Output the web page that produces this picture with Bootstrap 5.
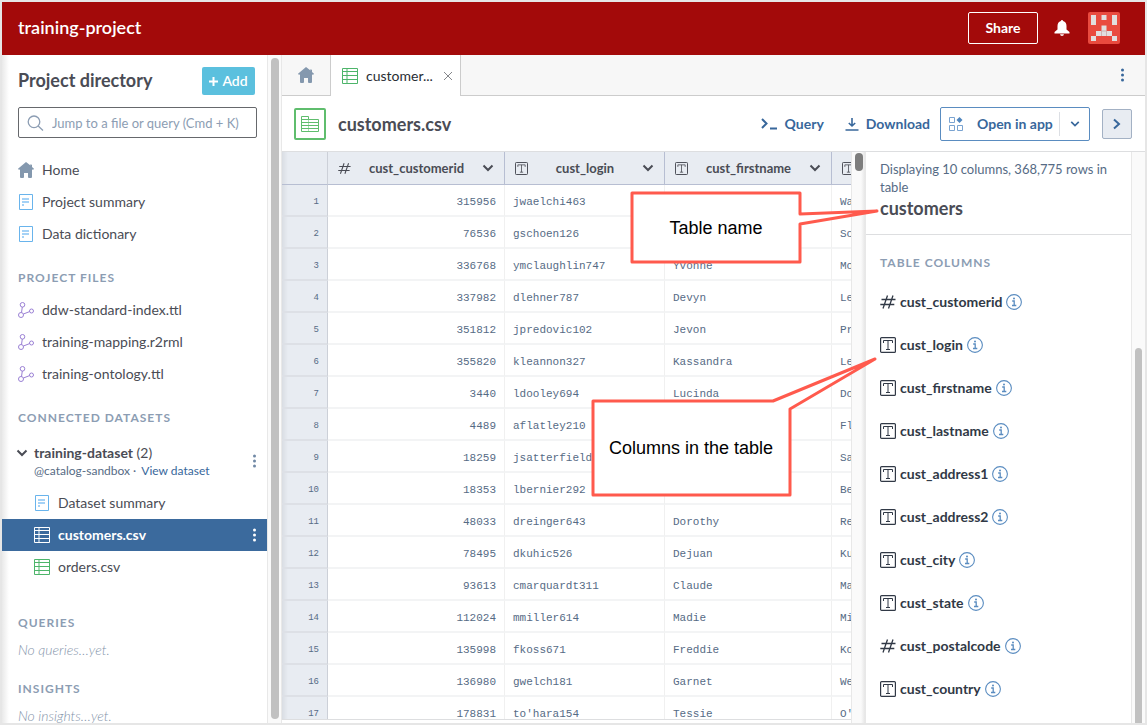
<!DOCTYPE html>
<html lang="en">
<head>
<meta charset="utf-8">
<meta name="viewport" content="width=device-width, initial-scale=1">
<title>training-project</title>
<link href="https://cdn.jsdelivr.net/npm/bootstrap@5.3.0/dist/css/bootstrap.min.css" rel="stylesheet">
<style>
:root{--ink:#4a4c55;--slate:#566b85;--mute:#8c9db3;--blue:#38679b;--line:#dddee0}
body{font-family:Lato,sans-serif;font-size:14px;line-height:20px;color:var(--ink);background:#fff}
button{font-family:inherit}
svg{display:block;flex:none}
.shell{height:100vh;border:2px solid #e6e6e6;overflow:hidden}
.topbar{height:53px;flex:none;background:#a30a0a;color:#fff;padding:0 25px 2px 16px}
.brand{font-size:18px;line-height:22px;padding-bottom:2px;font-weight:600}
.share{width:70px;height:32px;border:1px solid #fff;border-radius:2px;color:#fff;background:none;font-size:14px;font-weight:700;padding:0}
.bell{margin-left:16px}
.avatar{margin-left:18px}
.plain{background:none;border:0;padding:0;color:inherit}
.side{width:265px;flex:none;background:linear-gradient(90deg,#e9e9e9,#fff 7px);overflow:hidden;padding-top:12px}
.side-top{padding:0 12px 0 16px;height:28px}
.side-title{font-size:18px;font-weight:700;margin:0}
.add{width:53px;height:28px;border:0;border-radius:2px;background:#5bc0de;color:#fff;font-weight:600;font-size:14px;padding:0}
.finder{margin:12px 10px 16px 16px;height:31px;border:1px solid #66686c;border-radius:2px;padding:0 8px;color:var(--mute);background:#fff}
.finder input{border:0;outline:0;padding:0;min-width:0;width:100%;font-size:13px;background:none;color:var(--mute)}
.finder input::placeholder{color:#8c9db3;opacity:1}
.row-link{height:32px;padding:0 10px 0 16px;gap:8px;color:var(--ink);text-decoration:none;font-size:14px}
.row-link.sub{padding-left:32px}
.row-link.picked{background:#3b6a9d;color:#fff;font-weight:700}
.heading{margin:12px 16px 0;line-height:32px;font-size:12px;font-weight:700;letter-spacing:1px;color:var(--mute)}
.heading.far{margin-top:24px}
.none-yet{padding:0 16px;line-height:22px;font-style:italic;font-weight:300;color:#8494aa;margin:0}
.dataset{padding:9px 10px 8px 14px;gap:6px}
.dataset .handle{font-size:12px;line-height:16px;color:var(--slate)}
.dataset a{color:var(--blue);text-decoration:none;margin-left:2px}
.track{flex:none;width:15px;background:#fafafa;border:1px solid #e8e8e8;border-width:0 1px;padding:3px 3px 4px}
.thumb{border-radius:4px;background:#c1c1c1;width:8px}
.main{min-width:0}
.tabs{height:41px;flex:none;background:#f7f7f7;border-bottom:1px solid #ccc}
.tabs .home-tab{width:49px;border-right:1px solid #ccc;color:#8498ae}
.tabs .file-tab{width:130px;height:41px;background:#fff;border-right:1px solid #ccc;padding:0 7px 0 11px;color:#292d34;gap:8px}
.tab-menu{color:var(--blue);margin-right:20px}
.filebar{height:56px;flex:none;border-bottom:1px solid var(--line);padding:0 13px 0 12px}
.filebar h1{font-size:18px;font-weight:700;margin:0 0 0 12px;line-height:24px}
.tool{color:var(--blue);font-weight:700;gap:7px}
.tool+.tool{margin-left:21px}
.openin{width:150px;height:34px;margin-left:10px;border:1px solid #5a8cc0;border-radius:2px;background:#fff;color:var(--blue)}
.openin button{color:var(--blue);font-weight:700}
.openin .app{gap:14px;padding-left:8px}
.openin .split{width:30px;height:24px;border-left:1px solid #dcdfe4}
.fold{width:30px;height:30px;margin-left:12px;border:1px solid #a3b1c4;border-radius:2px;background:#e8ecf2;color:var(--blue);padding:0}
.panes{min-height:0}
.sheet{overflow:hidden;margin-bottom:3px;border-bottom:1px solid var(--line);min-width:0}
.grid-data{table-layout:fixed;width:710px;border-collapse:separate;border-spacing:0;font:11px/16px "Liberation Mono",monospace;color:var(--slate)}
.grid-data th,.grid-data td{height:32px;padding:3px 8px 0;white-space:nowrap;overflow:hidden;border-right:1px solid #f0f0f0;border-bottom:2px solid #f3f4f5;background:#fff}
.grid-data thead th{height:33px;background:#e8ecf2;border-right:1px solid #b7bed2;border-bottom:1px solid #b7bed2;font:700 13px/20px Lato,sans-serif;color:var(--ink);padding:0 10px}
.grid-data thead th:first-child,.grid-data tbody th{border-right:1px solid #ccd0d8}
.grid-data tbody th,.grid-data thead th:first-child{background:linear-gradient(90deg,#d9dde3,#e8ecf2 6px)}
.grid-data tbody th{border-bottom-color:#dde0e6;text-align:right;font-weight:400;font-size:9px}
.grid-data .num{text-align:right}
.sheet-track{padding-top:1px;background:linear-gradient(90deg,#fafafa 9px,#e6e6e6)}
.sheet-track .thumb{height:18px;background:#7d7d7d}
.info{width:266px;flex:none;overflow:hidden;border-right:1px solid #e8e8e8}
.summary{padding:8px 14px 14px;line-height:18px;font-size:13px;color:var(--slate);border-bottom:1px solid var(--line)}
.summary h2{font-size:18px;line-height:24px;font-weight:700;margin:0;color:var(--ink)}
.info h3{margin:20px 14px 9px;font-size:12px;line-height:16px;font-weight:700;letter-spacing:1px;color:var(--mute)}
.field{height:43px;margin:0 14px;gap:4px;font-size:14px;font-weight:700;color:#313946}
.field .plain{color:#5a8cc0}
.info-track{width:13px;border:0;padding-bottom:0}
.info-track .thumb{height:66%;border-radius:4px 4px 0 0}
.note{position:absolute;z-index:2;pointer-events:none}
.note text{font:18px "Liberation Sans",sans-serif;text-anchor:middle;fill:#000}
.note path{fill:#fff;stroke:#ff5a4d;stroke-width:3;stroke-linejoin:round}
.note-name{top:134px;right:264px}
.note-cols{top:301px;right:266px}
</style>
</head>
<body>
<svg width="0" height="0" class="position-absolute" aria-hidden="true">
<symbol id="home" viewBox="0 0 16 16"><path fill="currentColor" d="M8 0 0 6.8 1 8l1-.7V15q0 1 1 1h2q1 0 1-1v-4h4v4q0 1 1 1h2q1 0 1-1V7.300l1 .7 1-1.200-2-1.700V3l-1.500-1v1.600z"/></symbol>
<symbol id="doc" viewBox="0 0 16 16"><path fill="#fff" stroke="#69b4ec" d="M1.500.5h13v15h-13z"/><path stroke="#a5d2f6" stroke-width="2" d="M4 5h7M4 8h7M4 11h2"/></symbol>
<symbol id="graph" viewBox="0 0 16 16"><g fill="none" stroke="#9a80d4"><circle cx="4.500" cy="2.800" r="2.300"/><circle cx="3" cy="13" r="2.500"/><circle cx="13.500" cy="9" r="2"/><path d="M4.300 5 3.500 10.500M5.400 12 11.600 9.600"/></g></symbol>
<symbol id="grid" viewBox="0 0 16 16"><g fill="none" stroke="currentColor"><path d="M.5.5h15v15H.5zM.5 3.500h15M.5 7.500h15M.5 11.500h15"/><path opacity=".5" stroke-width="2" d="M5 1v14"/></g></symbol>
<symbol id="dots" viewBox="0 0 4 16"><g fill="currentColor"><circle cx="2" cy="3" r="1.500"/><circle cx="2" cy="8" r="1.500"/><circle cx="2" cy="13" r="1.500"/></g></symbol>
<symbol id="down" viewBox="0 0 12 12"><path fill="none" stroke="currentColor" stroke-width="2" d="m1.500 3.500 4.500 4.500 4.500-4.500"/></symbol>
<symbol id="typeT" viewBox="0 0 16 16"><rect x=".6" y=".6" width="14.800" height="14.800" rx="1" fill="none" stroke="currentColor" stroke-width="1.200"/><path fill="none" stroke="currentColor" d="M3.500 6V3.500h9V6M8 3.500v9M6 12.500h4"/></symbol>
<symbol id="hash" viewBox="0 0 16 16"><path fill="none" stroke="currentColor" stroke-width="1.300" d="M7.500 1.500 3 14.500M13 1.500 8.500 14.500M1.500 5.500h14M.3 10.500h14"/></symbol>
<symbol id="info" viewBox="0 0 16 16"><circle cx="8" cy="8" r="7.400" fill="none" stroke="currentColor" stroke-width="1.100"/><path fill="none" stroke="currentColor" stroke-width="1.300" d="M6.200 7h2v4.500M6 11.500h4.300"/><circle cx="8" cy="4.500" r="1" fill="currentColor"/></symbol>
</svg>
<div class="shell d-flex flex-column">
<header class="topbar d-flex align-items-center">
<span class="brand me-auto">training-project</span>
<button class="share">Share</button>
<button class="plain bell" aria-label="Notifications"><svg width="16" height="16" viewBox="0 0 16 16"><path fill="#fff" d="M8 0q1 0 1.100 1Q12.500 2 12.500 6v3.500L15.500 12v1.500H.5V12L3.500 9.500V6q0-4 3.400-5Q7 0 8 0M6 14.200h4Q9.800 16 8 16t-2-1.800"/></svg></button>
<button class="plain avatar" aria-label="Account"><svg width="32" height="32" viewBox="0 0 32 32"><rect width="32" height="32" rx="2" fill="#e94b3f"/><path fill="#e2dfdf" d="M3 3h5v10H3zM13.500 3h5v5h-5zM24 3h5v10h-5zM13.500 13.500h5V19H24v5H8v-5h5.500zM3 24h5v5H3zM24 24h5v5h-5z"/><path stroke="#c9a09d" stroke-width=".7" d="M13.500 19h5M13.500 19v5M18.500 19v5"/></svg></button>
</header>
<div class="d-flex flex-grow-1 panes">
<nav class="side">
<div class="side-top d-flex align-items-center justify-content-between"><h2 class="side-title">Project directory</h2><button class="add d-flex align-items-center justify-content-center gap-1"><svg width="9" height="9"><path stroke="#fff" stroke-width="2" d="M4.500 0v9M0 4.500h9"/></svg>Add</button></div>
<label class="finder d-flex align-items-center gap-2"><svg width="17" height="16" viewBox="0 0 17 16"><g fill="none" stroke="currentColor" stroke-width="1.300"><circle cx="7" cy="6.800" r="5.800"/><path d="m11.200 11 4.800 4.500"/></g></svg><input type="text" aria-label="Find" placeholder="Jump to a file or query (Cmd + K)"></label>
<a href="#" class="row-link d-flex align-items-center"><svg width="16" height="16" color="#8498ae"><use href="#home"/></svg>Home</a>
<a href="#" class="row-link d-flex align-items-center"><svg width="16" height="16"><use href="#doc"/></svg>Project summary</a>
<a href="#" class="row-link d-flex align-items-center"><svg width="16" height="16"><use href="#doc"/></svg>Data dictionary</a>
<h3 class="heading">PROJECT FILES</h3>
<a href="#" class="row-link d-flex align-items-center"><svg width="16" height="16"><use href="#graph"/></svg>ddw-standard-index.ttl</a>
<a href="#" class="row-link d-flex align-items-center"><svg width="16" height="16"><use href="#graph"/></svg>training-mapping.r2rml</a>
<a href="#" class="row-link d-flex align-items-center"><svg width="16" height="16"><use href="#graph"/></svg>training-ontology.ttl</a>
<h3 class="heading">CONNECTED DATASETS</h3>
<div class="dataset d-flex align-items-center">
<svg width="12" height="12" class="align-self-start mt-1"><use href="#down"/></svg><div class="me-auto"><strong>training-dataset</strong> (2)<div class="handle">@catalog-sandbox · <a href="#">View dataset</a></div></div>
<button class="plain" style="color:#7088a5" aria-label="Dataset menu"><svg width="5" height="16"><use href="#dots"/></svg></button></div>
<a href="#" class="row-link sub d-flex align-items-center"><svg width="16" height="16"><use href="#doc"/></svg>Dataset summary</a>
<a href="#" class="row-link sub picked d-flex align-items-center"><svg width="16" height="16"><use href="#grid"/></svg><span class="me-auto">customers.csv</span><svg width="5" height="16"><use href="#dots"/></svg></a>
<a href="#" class="row-link sub d-flex align-items-center"><svg width="16" height="16" color="#4db56a"><use href="#grid"/></svg>orders.csv</a>
<h3 class="heading far">QUERIES</h3><p class="none-yet">No queries…yet.</p>
<h3 class="heading">INSIGHTS</h3><p class="none-yet">No insights…yet.</p>
</nav>
<div class="track"><div class="thumb h-100"></div></div>
<main class="main flex-grow-1 d-flex flex-column position-relative">
<div class="tabs d-flex">
<a href="#" class="home-tab d-flex align-items-center justify-content-center" aria-label="Home"><svg width="16" height="16"><use href="#home"/></svg></a>
<div class="file-tab d-flex align-items-center"><svg width="16" height="16" color="#4db56a"><use href="#grid"/></svg><span class="me-auto">customer...</span><button class="plain" aria-label="Close"><svg width="10" height="10"><path stroke="#85878b" d="m1 1 8 8M9 1 1 9"/></svg></button></div>
<button class="plain ms-auto tab-menu" aria-label="Tab menu"><svg width="5" height="16"><use href="#dots"/></svg></button>
</div>
<div class="filebar d-flex align-items-center">
<svg width="32" height="32" viewBox="0 0 32 32"><rect x="1" y="1" width="30" height="30" rx="1" fill="#fff" stroke="#5fbd6d" stroke-width="2"/><path fill="none" stroke="#5fbd6d" d="M7.500 8.500h7v3h10v12h-17zM7.500 11.500h7M7.500 14.500h17M7.500 17.500h17M7.500 20.500h17"/><path fill="none" stroke="#5fbd6d" opacity=".5" d="M14.500 11v12"/></svg>
<h1 class="me-auto">customers.csv</h1>
<button class="plain tool d-flex align-items-center"><svg width="17" height="12"><path fill="none" stroke="currentColor" stroke-width="2" d="m1 1 4.500 4.500L1 10M9 10.500h7"/></svg>Query</button>
<button class="plain tool d-flex align-items-center"><svg width="14" height="14"><path fill="none" stroke="currentColor" stroke-width="1.600" d="M7 1v8M3.800 6 7 9l3.200-3M.5 13h13"/></svg>Download</button>
<div class="openin d-flex align-items-center"><button class="plain app d-flex align-items-center flex-grow-1"><svg width="14" height="14"><path fill="none" stroke="#79a3d1" d="M.5.5h5v5h-5zM.5 8.500h5v5h-5zM8.500 8.500h5v5h-5z"/><path fill="#4f86bf" d="m10.500 0 3 3-3 3-3-3z"/></svg>Open in app</button><button class="plain split d-flex align-items-center justify-content-center" aria-label="More apps"><svg width="10" height="10"><use href="#down"/></svg></button></div>
<button class="fold d-flex align-items-center justify-content-center" aria-label="Collapse panel"><svg width="10" height="12"><path fill="none" stroke="currentColor" stroke-width="2" d="m2 1.500 5 4.500-5 4.500"/></svg></button>
</div>
<div class="d-flex flex-grow-1 panes">
<div class="sheet flex-grow-1">
<table class="grid-data">
<colgroup><col style="width:46px"><col style="width:177px"><col style="width:160px"><col style="width:167px"><col style="width:160px"></colgroup>
<thead><tr><th></th>
<th><div class="d-flex align-items-center justify-content-between"><svg width="13" height="13"><use href="#hash"/></svg>cust_customerid<svg width="12" height="12"><use href="#down"/></svg></div></th>
<th><div class="d-flex align-items-center justify-content-between"><svg width="13" height="13"><use href="#typeT"/></svg>cust_login<svg width="12" height="12"><use href="#down"/></svg></div></th>
<th><div class="d-flex align-items-center justify-content-between"><svg width="13" height="13"><use href="#typeT"/></svg>cust_firstname<svg width="12" height="12"><use href="#down"/></svg></div></th>
<th aria-label="cust_lastname"><svg width="13" height="13"><use href="#typeT"/></svg></th></tr></thead>
<tbody>
<tr><th>1</th><td class="num">315956</td><td>jwaelchi463</td><td></td><td>Wa</td></tr>
<tr><th>2</th><td class="num">76536</td><td>gschoen126</td><td></td><td>Sc</td></tr>
<tr><th>3</th><td class="num">336768</td><td>ymclaughlin747</td><td>Yvonne</td><td>Mo</td></tr>
<tr><th>4</th><td class="num">337982</td><td>dlehner787</td><td>Devyn</td><td>Le</td></tr>
<tr><th>5</th><td class="num">351812</td><td>jpredovic102</td><td>Jevon</td><td>Pr</td></tr>
<tr><th>6</th><td class="num">355820</td><td>kleannon327</td><td>Kassandra</td><td>Le</td></tr>
<tr><th>7</th><td class="num">3440</td><td>ldooley694</td><td>Lucinda</td><td>Do</td></tr>
<tr><th>8</th><td class="num">4489</td><td>aflatley210</td><td></td><td>Fl</td></tr>
<tr><th>9</th><td class="num">18259</td><td>jsatterfield</td><td></td><td>Sa</td></tr>
<tr><th>10</th><td class="num">18353</td><td>lbernier292</td><td></td><td>Be</td></tr>
<tr><th>11</th><td class="num">48033</td><td>dreinger643</td><td>Dorothy</td><td>Re</td></tr>
<tr><th>12</th><td class="num">78495</td><td>dkuhic526</td><td>Dejuan</td><td>Ku</td></tr>
<tr><th>13</th><td class="num">93613</td><td>cmarquardt311</td><td>Claude</td><td>Ma</td></tr>
<tr><th>14</th><td class="num">112024</td><td>mmiller614</td><td>Madie</td><td>Mi</td></tr>
<tr><th>15</th><td class="num">135998</td><td>fkoss671</td><td>Freddie</td><td>Ko</td></tr>
<tr><th>16</th><td class="num">136980</td><td>gwelch181</td><td>Garnet</td><td>We</td></tr>
<tr><th>17</th><td class="num">178831</td><td>to'hara154</td><td>Tessie</td><td>O'</td></tr>
</tbody></table>
</div>
<div class="track sheet-track"><div class="thumb"></div></div>
<aside class="info">
<div class="summary">Displaying 10 columns, 368,775 rows in table<h2>customers</h2></div>
<h3>TABLE COLUMNS</h3>
<div class="field d-flex align-items-center"><svg width="16" height="16"><use href="#hash"/></svg>cust_customerid<button class="plain" aria-label="About cust_customerid"><svg width="16" height="16"><use href="#info"/></svg></button></div>
<div class="field d-flex align-items-center"><svg width="16" height="16"><use href="#typeT"/></svg>cust_login<button class="plain" aria-label="About cust_login"><svg width="16" height="16"><use href="#info"/></svg></button></div>
<div class="field d-flex align-items-center"><svg width="16" height="16"><use href="#typeT"/></svg>cust_firstname<button class="plain" aria-label="About cust_firstname"><svg width="16" height="16"><use href="#info"/></svg></button></div>
<div class="field d-flex align-items-center"><svg width="16" height="16"><use href="#typeT"/></svg>cust_lastname<button class="plain" aria-label="About cust_lastname"><svg width="16" height="16"><use href="#info"/></svg></button></div>
<div class="field d-flex align-items-center"><svg width="16" height="16"><use href="#typeT"/></svg>cust_address1<button class="plain" aria-label="About cust_address1"><svg width="16" height="16"><use href="#info"/></svg></button></div>
<div class="field d-flex align-items-center"><svg width="16" height="16"><use href="#typeT"/></svg>cust_address2<button class="plain" aria-label="About cust_address2"><svg width="16" height="16"><use href="#info"/></svg></button></div>
<div class="field d-flex align-items-center"><svg width="16" height="16"><use href="#typeT"/></svg>cust_city<button class="plain" aria-label="About cust_city"><svg width="16" height="16"><use href="#info"/></svg></button></div>
<div class="field d-flex align-items-center"><svg width="16" height="16"><use href="#typeT"/></svg>cust_state<button class="plain" aria-label="About cust_state"><svg width="16" height="16"><use href="#info"/></svg></button></div>
<div class="field d-flex align-items-center"><svg width="16" height="16"><use href="#hash"/></svg>cust_postalcode<button class="plain" aria-label="About cust_postalcode"><svg width="16" height="16"><use href="#info"/></svg></button></div>
<div class="field d-flex align-items-center"><svg width="16" height="16"><use href="#typeT"/></svg>cust_country<button class="plain" aria-label="About cust_country"><svg width="16" height="16"><use href="#info"/></svg></button></div>
</aside>
<div class="track info-track d-flex align-items-end"><div class="thumb"></div></div>
</div>
<svg class="note note-name" width="252" height="78"><path d="M3 4h168v21l77-3-77 13v38H3z"/><text x="87" y="45">Table name</text></svg>
<svg class="note note-cols" width="288" height="142"><path d="M2 45h180L284 3 199 53v86H2z"/><text x="100" y="98">Columns in the table</text></svg>
</main>
</div>
</div>
<script src="https://cdn.jsdelivr.net/npm/bootstrap@5.3.0/dist/js/bootstrap.bundle.min.js"></script>
</body>
</html>
